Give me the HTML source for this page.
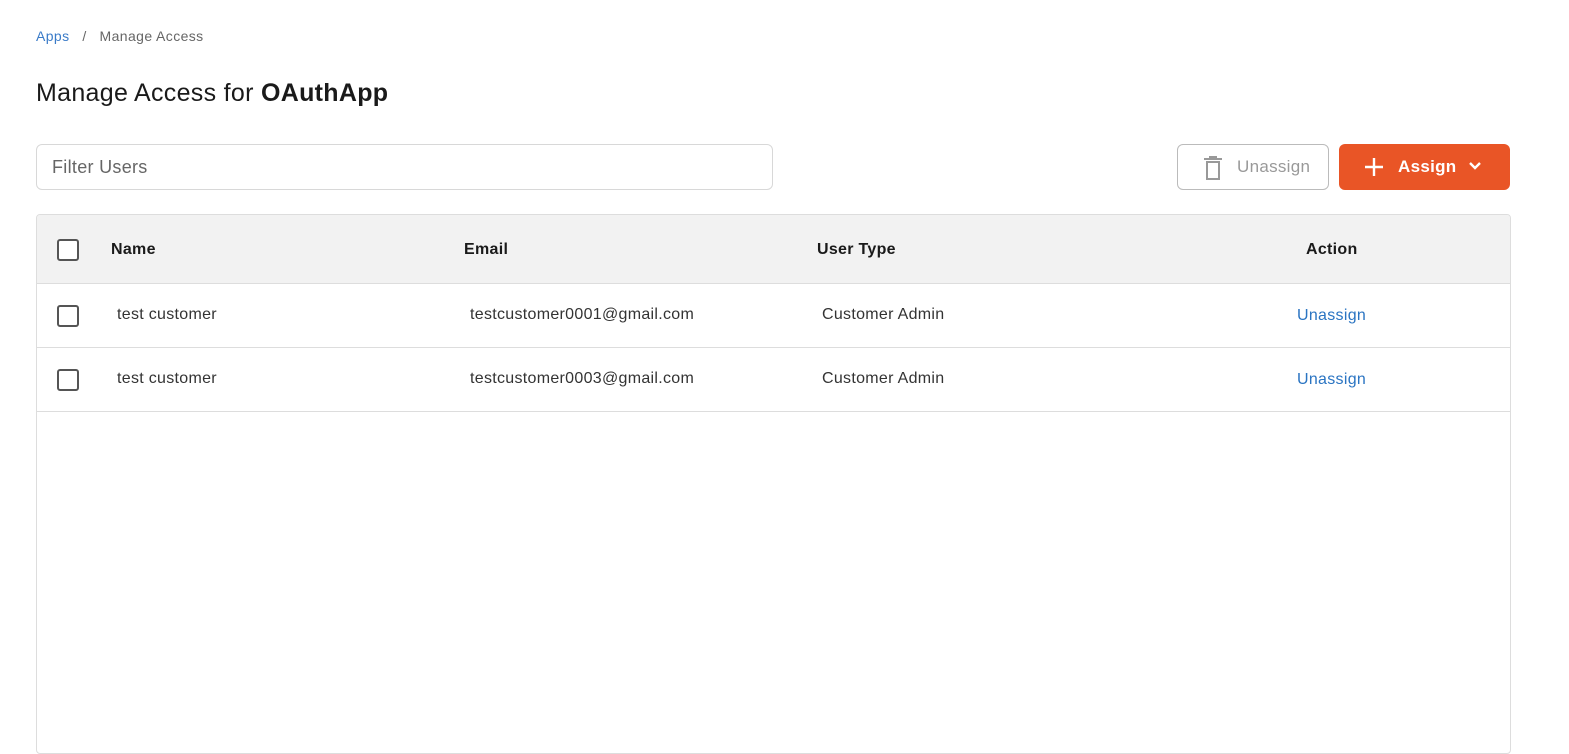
<!DOCTYPE html>
<html><head><meta charset="utf-8"><style>
*{box-sizing:border-box;margin:0;padding:0}
body{width:1569px;height:742px;overflow:hidden;background:#fff;font-family:"Liberation Sans",sans-serif;color:#222;position:relative}
.a{position:absolute}
.cb{position:absolute;width:22px;height:22px;border:2px solid #555;border-radius:3px;background:#fff}
</style></head><body>
<div class="a" style="left:36px;top:28px;font-size:14px;color:#666;letter-spacing:0.4px"><span style="color:#3a7bc8">Apps</span>&nbsp;&nbsp; / &nbsp;&nbsp;Manage Access</div>
<div class="a" style="left:36px;top:79px;font-size:25px;color:#1a1a1a;letter-spacing:0.3px">Manage Access for <b>OAuthApp</b></div>
<div class="a" style="left:36px;top:144px;width:737px;height:46px;border:1px solid #d8d8d8;border-radius:6px;padding:12px 15px;font-size:18px;color:#666;letter-spacing:0.3px">Filter Users</div>
<div class="a" style="left:1177px;top:144px;width:152px;height:46px;border:1px solid #bbb;border-radius:6px;font-size:17px;color:#999;letter-spacing:0.3px">
<svg class="a" style="left:25px;top:11px" width="20" height="24" viewBox="0 0 20 24"><path d="M1 3h18M7 3V1h6v2M4 6v17h12V6z" fill="none" stroke="#999" stroke-width="2"/></svg>
<span class="a" style="left:59px;top:12px">Unassign</span></div>
<div class="a" style="left:1339px;top:144px;width:171px;height:46px;background:#e95526;border-radius:6px;color:#fff;font-size:17px;font-weight:bold;letter-spacing:0.3px">
<svg class="a" style="left:25px;top:13px" width="20" height="20" viewBox="0 0 20 20"><path d="M10 1v18M1 10h18" stroke="#fff" stroke-width="2.4"/></svg>
<span class="a" style="left:59px;top:13px">Assign</span>
<svg class="a" style="left:129px;top:17px" width="14" height="10" viewBox="0 0 14 10"><path d="M2 2l5 5 5-5" fill="none" stroke="#fff" stroke-width="2.4"/></svg></div>
<div class="a" style="left:36px;top:214px;width:1475px;height:540px;border:1px solid #ddd;border-radius:4px;overflow:hidden">
<div class="a" style="left:0;top:0;width:100%;height:69px;background:#f2f2f2;border-bottom:1px solid #ddd;font-size:16px;font-weight:bold;color:#1a1a1a;letter-spacing:0.3px">
<div class="cb" style="left:20px;top:24px"></div>
<span class="a" style="left:74px;top:26px">Name</span><span class="a" style="left:427px;top:26px">Email</span><span class="a" style="left:780px;top:26px">User Type</span><span class="a" style="left:1269px;top:26px">Action</span></div>
<div class="a" style="left:0;top:69px;width:100%;height:64px;border-bottom:1px solid #ddd;font-size:16px;color:#333;letter-spacing:0.3px">
<div class="cb" style="left:20px;top:21px"></div>
<span class="a" style="left:80px;top:22px">test customer</span><span class="a" style="left:433px;top:22px">testcustomer0001@gmail.com</span><span class="a" style="left:785px;top:22px">Customer Admin</span><span class="a" style="left:1260px;top:23px;color:#2a74c2">Unassign</span></div>
<div class="a" style="left:0;top:133px;width:100%;height:64px;border-bottom:1px solid #ddd;font-size:16px;color:#333;letter-spacing:0.3px">
<div class="cb" style="left:20px;top:21px"></div>
<span class="a" style="left:80px;top:22px">test customer</span><span class="a" style="left:433px;top:22px">testcustomer0003@gmail.com</span><span class="a" style="left:785px;top:22px">Customer Admin</span><span class="a" style="left:1260px;top:23px;color:#2a74c2">Unassign</span></div>
</div>
</body></html>
